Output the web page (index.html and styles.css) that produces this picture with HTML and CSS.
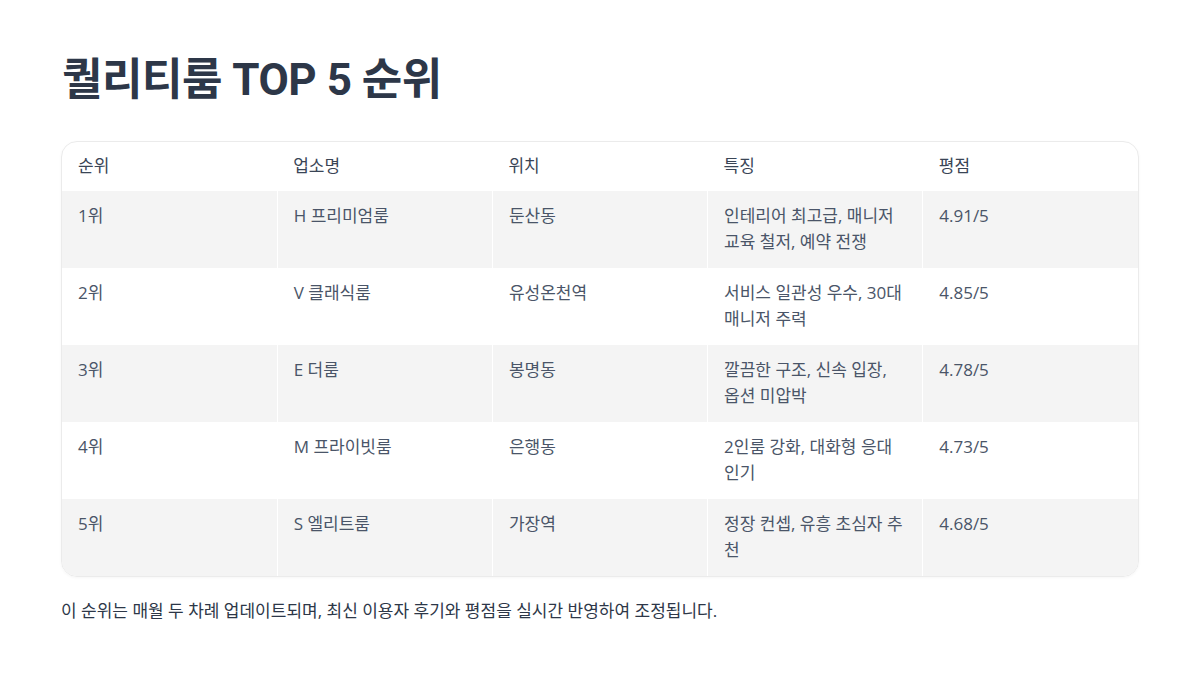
FILE: index.html
```html
<!DOCTYPE html>
<html lang="ko">
<head>
<meta charset="utf-8">
<link rel="stylesheet" href="styles.css">
</head>
<body>
<main class="page">
  <h1 class="title">퀄리티룸 TOP 5 순위</h1>
  <div class="table-wrap">
    <table class="rank-table">
      <thead>
        <tr><th>순위</th><th>업소명</th><th>위치</th><th>특징</th><th>평점</th></tr>
      </thead>
      <tbody>
        <tr><td>1위</td><td>H 프리미엄룸</td><td>둔산동</td><td>인테리어 최고급, 매니저 교육 철저, 예약 전쟁</td><td>4.91/5</td></tr>
        <tr><td>2위</td><td>V 클래식룸</td><td>유성온천역</td><td>서비스 일관성 우수, 30대 매니저 주력</td><td>4.85/5</td></tr>
        <tr><td>3위</td><td>E 더룸</td><td>봉명동</td><td>깔끔한 구조, 신속 입장, 옵션 미압박</td><td>4.78/5</td></tr>
        <tr><td>4위</td><td>M 프라이빗룸</td><td>은행동</td><td>2인룸 강화, 대화형 응대 인기</td><td>4.73/5</td></tr>
        <tr><td>5위</td><td>S 엘리트룸</td><td>가장역</td><td>정장 컨셉, 유흥 초심자 추천</td><td>4.68/5</td></tr>
      </tbody>
    </table>
  </div>
  <p class="note">이 순위는 매월 두 차례 업데이트되며, 최신 이용자 후기와 평점을 실시간 반영하여 조정됩니다.</p>
</main>
</body>
</html>
```

FILE: styles.css
```css
* { box-sizing: border-box; }
html, body { margin: 0; padding: 0; background: #ffffff; }
body {
  font-family: "Open Sans", "Noto Sans CJK KR", sans-serif;
  color: #2d3748;
}
.page {
  padding: 48px 61px 0 61px;
}
.title {
  margin: 0 0 0 1px;
  font-family: Roboto, "Noto Sans CJK KR", sans-serif;
  font-size: 44px;
  line-height: 64px;
  font-weight: 700;
  color: #2d3748;
  letter-spacing: -0.5px;
}
.table-wrap {
  margin-top: 29px;
  border: 1px solid #ebebeb;
  border-radius: 16px;
  overflow: hidden;
  box-shadow: 0 1px 3px rgba(0,0,0,0.04);
}
.rank-table {
  width: 100%;
  border-collapse: collapse;
  table-layout: fixed;
  font-size: 17px;
  line-height: 26px;
  color: #4a5568;
}
.rank-table th {
  text-align: left;
  font-weight: 400;
  padding: 11px 16px 12px 16px;
  height: 49px;
  color: #3a4556;
}
.rank-table td {
  vertical-align: top;
  padding: 12px 16px 13px 16px;
  height: 77px;
  border-left: 1px solid #ffffff;
}
.rank-table td:first-child { border-left: none; }
.rank-table tbody tr:nth-child(odd) { background: #f4f4f4; }
.rank-table tbody tr:nth-child(even) { background: #ffffff; }
.note {
  margin: 21px 0 0 0;
  font-size: 17px;
  line-height: 26px;
  color: #2d3748;
}
```
